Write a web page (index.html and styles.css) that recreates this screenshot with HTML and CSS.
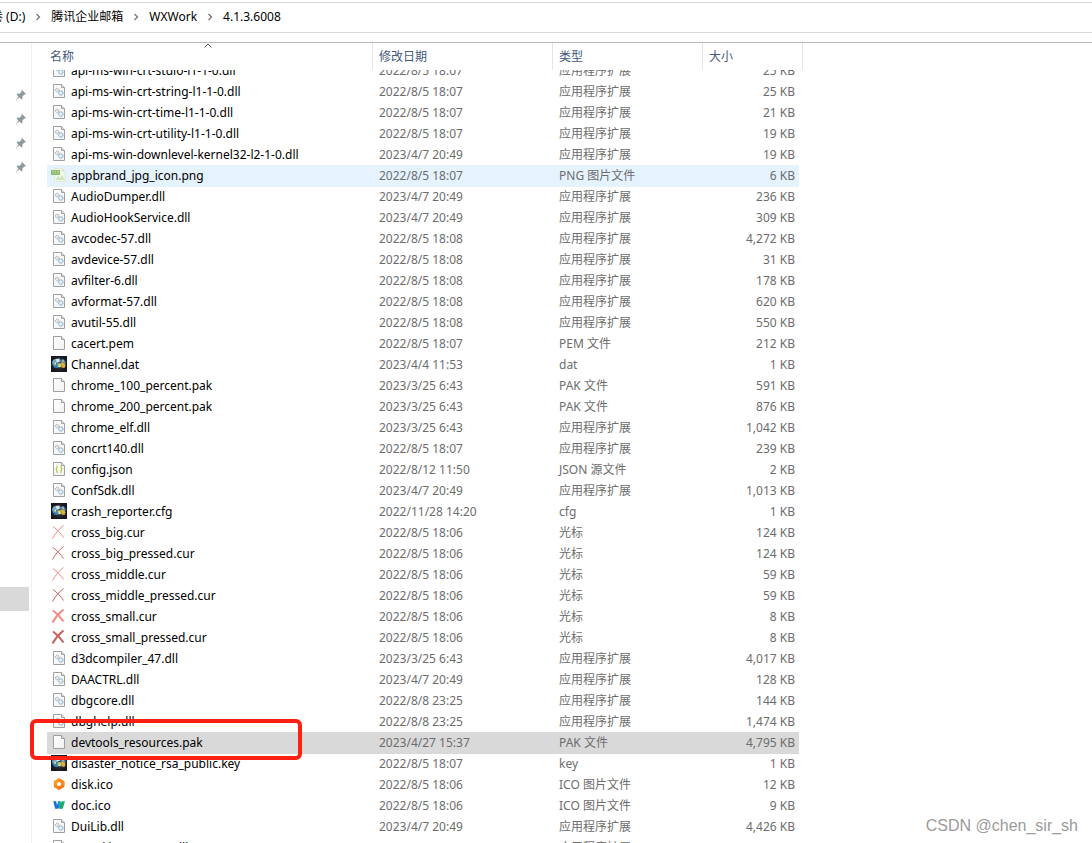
FILE: index.html
```html
<!DOCTYPE html>
<html lang="zh-CN">
<head>
<meta charset="utf-8">
<title>4.1.3.6008</title>
<link rel="stylesheet" href="styles.css">
</head>
<body>
<svg class="defs" aria-hidden="true">
  <defs>
    <linearGradient id="paper" x1="0" y1="0" x2="1" y2="1"><stop offset="0" stop-color="#fff"/><stop offset="1" stop-color="#f1f1f1"/></linearGradient>
    <linearGradient id="orange" x1="0" y1="0" x2="1" y2="1"><stop offset="0" stop-color="#ffb020"/><stop offset="1" stop-color="#f25a0c"/></linearGradient>
    <radialGradient id="night"><stop offset="0" stop-color="#3d4352"/><stop offset="1" stop-color="#17181f"/></radialGradient>
  </defs>
  <symbol id="file" viewBox="0 0 16 16"><path d="M2.5 1.5h8l3 3v10h-11z" fill="url(#paper)" stroke="#a0a0a0"/><path d="M10.5 1.5v3h3" fill="#e8e8e8" stroke="#a0a0a0"/></symbol>
  <symbol id="dll" viewBox="0 0 16 16"><use href="#file"/><circle cx="6.2" cy="7" r="1.8" fill="#e4e8ea" stroke="#9ea7ad" stroke-dasharray="1.2 .5"/><circle cx="9.8" cy="10" r="2.2" fill="#d7eaf5" stroke="#7fa6c0" stroke-dasharray="1.4 .4"/><circle cx="9.8" cy="10" r=".7" fill="#fff"/></symbol>
  <symbol id="json" viewBox="0 0 16 16"><use href="#file"/><path d="M6.8 5c-1.2 0-1 .8-1 1.7S5.5 8 4.700 8.200c.8.2 1.100.6 1.100 1.500s-.2 1.800 1 1.800M9.200 5c1.200 0 1 .8 1 1.700s.3 1.300 1.100 1.500c-.8.2-1.100.6-1.100 1.500s.2 1.800-1 1.800" fill="none" stroke="#b9c63c" stroke-width="1.200"/></symbol>
  <symbol id="png" viewBox="0 0 16 16"><path d="M3.500 1.500h7.500l3 3v10h-10.500z" fill="#f2f8ea" stroke="#dfe9d6"/><path d="M11 1.500v3h3" fill="#c9dfb8"/><path d="M5 12l2-3 2 2 2-3 2 4v1H5z" fill="#cfe5bd"/><path d="M0 3h9v5H0z" fill="#91bd70"/><path d="M1.500 4.500h1.500M4 4.500h1M6.500 4.500h1.500M1.500 6h1M4 6h1M6.500 6h1.500" stroke="#b9d6a2"/></symbol>
  <symbol id="app" viewBox="0 0 16 16"><path d="M0 0h16v16H0z" fill="url(#night)"/><path d="M1 6l1.500-2.500L5 3l1 3-1 3-3 1z" fill="#6fa9c6"/><path d="M4.500 3l4-.5.5 3-3 1.500z" fill="#dce7e8"/><path d="M8.500 4l4-1 2.500 3-1 3-4-1z" fill="#4f7c9b"/><path d="M2 8.500l3-1.500 2.500 1-.5 4-4-.5z" fill="#3989bb"/><path d="M6.500 7.500l3-.5 1 2.500-1.500 2-2-.5z" fill="#b9cf62"/><path d="M10 7l3-.5 1.500 3-1 2.500-3-.5z" fill="#dfae42"/><path d="M3.500 7l1.500-.5v2l-1.500.5zM11 4.500l2 0v1h-2zM8 9.500h1.500V11H8z" fill="#f0dfae"/></symbol>
  <symbol id="cross" viewBox="0 0 16 16"><path d="M2 2.500c4 3 8 7 10.500 11M12.500 1.500C8 5 4.500 9 1.500 14.500" fill="none" stroke="currentColor"/></symbol>
  <symbol id="disk" viewBox="0 0 16 16"><path d="M8 2l5.200 3v6L8 14l-5.200-3V5z" fill="url(#orange)"/><path d="M8 5.800l2 1.100v2.300l-2 1.100-2-1.100V6.900z" fill="#fff"/><path d="M10 6.900l3.500-2v5.200L10 9.200z" fill="#ff8b15"/></symbol>
  <symbol id="doc" viewBox="0 0 16 16"><path d="M2.200 4.200h3L6 8.500 7.200 4.200h2L7.500 11.800H4.200z" fill="#166fd8"/><path d="M7 4.200h2.500L11.200 9l-.7 2.800H8.200z" fill="#16a8bc"/><path d="M10.500 4.200H14L11.700 11.800H9.200z" fill="#24ae54"/></symbol>
  <symbol id="pin" viewBox="0 0 12 12"><path d="M7 1l4 4-1 .8-.8-.3L7.300 7.700l.2 2-1 .8-2.300-2.300L1 11l-.2-.2 2.700-3.300-2-2 .9-.9 2 .2L6.600 2.700 6.300 1.700z" fill="#8d979f"/></symbol>
  <symbol id="chevron" viewBox="0 0 6 8"><path d="M1.500 1l3 3-3 3" fill="none" stroke="#777" stroke-width="1.300"/></symbol>
</svg>

<nav class="address" aria-label="路径">
  <a class="crumb crumb-first" href="#">卷 (D:)</a>
  <svg class="chevron"><use href="#chevron"/></svg>
  <a class="crumb" href="#">腾讯企业邮箱</a>
  <svg class="chevron"><use href="#chevron"/></svg>
  <a class="crumb" href="#">WXWork</a>
  <svg class="chevron"><use href="#chevron"/></svg>
  <a class="crumb" href="#">4.1.3.6008</a>
</nav>

<div class="body">
  <aside class="sidebar">
    <div class="pins">
      <svg class="pin"><use href="#pin"/></svg>
      <svg class="pin"><use href="#pin"/></svg>
      <svg class="pin"><use href="#pin"/></svg>
      <svg class="pin"><use href="#pin"/></svg>
    </div>
    <div class="current"></div>
  </aside>

  <main class="files">
    <table class="table">
      <thead>
        <tr><th scope="col">名称<svg class="sort" viewBox="0 0 8 5"><path d="M.5 4.500L4 1l3.500 3.500" fill="none" stroke="#555"/></svg></th><th scope="col">修改日期</th><th scope="col">类型</th><th scope="col">大小</th></tr>
      </thead>
      <tbody>
        <tr><td><svg><use href="#dll"/></svg>api-ms-win-crt-stdio-l1-1-0.dll</td><td>2022/8/5 18:07</td><td>应用程序扩展</td><td>25 KB</td></tr>
        <tr><td><svg><use href="#dll"/></svg>api-ms-win-crt-string-l1-1-0.dll</td><td>2022/8/5 18:07</td><td>应用程序扩展</td><td>25 KB</td></tr>
        <tr><td><svg><use href="#dll"/></svg>api-ms-win-crt-time-l1-1-0.dll</td><td>2022/8/5 18:07</td><td>应用程序扩展</td><td>21 KB</td></tr>
        <tr><td><svg><use href="#dll"/></svg>api-ms-win-crt-utility-l1-1-0.dll</td><td>2022/8/5 18:07</td><td>应用程序扩展</td><td>19 KB</td></tr>
        <tr><td><svg><use href="#dll"/></svg>api-ms-win-downlevel-kernel32-l2-1-0.dll</td><td>2023/4/7 20:49</td><td>应用程序扩展</td><td>19 KB</td></tr>
        <tr class="hover"><td><svg><use href="#png"/></svg>appbrand_jpg_icon.png</td><td>2022/8/5 18:07</td><td>PNG 图片文件</td><td>6 KB</td></tr>
        <tr><td><svg><use href="#dll"/></svg>AudioDumper.dll</td><td>2023/4/7 20:49</td><td>应用程序扩展</td><td>236 KB</td></tr>
        <tr><td><svg><use href="#dll"/></svg>AudioHookService.dll</td><td>2023/4/7 20:49</td><td>应用程序扩展</td><td>309 KB</td></tr>
        <tr><td><svg><use href="#dll"/></svg>avcodec-57.dll</td><td>2022/8/5 18:08</td><td>应用程序扩展</td><td>4,272 KB</td></tr>
        <tr><td><svg><use href="#dll"/></svg>avdevice-57.dll</td><td>2022/8/5 18:08</td><td>应用程序扩展</td><td>31 KB</td></tr>
        <tr><td><svg><use href="#dll"/></svg>avfilter-6.dll</td><td>2022/8/5 18:08</td><td>应用程序扩展</td><td>178 KB</td></tr>
        <tr><td><svg><use href="#dll"/></svg>avformat-57.dll</td><td>2022/8/5 18:08</td><td>应用程序扩展</td><td>620 KB</td></tr>
        <tr><td><svg><use href="#dll"/></svg>avutil-55.dll</td><td>2022/8/5 18:08</td><td>应用程序扩展</td><td>550 KB</td></tr>
        <tr><td><svg><use href="#file"/></svg>cacert.pem</td><td>2022/8/5 18:07</td><td>PEM 文件</td><td>212 KB</td></tr>
        <tr><td><svg><use href="#app"/></svg>Channel.dat</td><td>2023/4/4 11:53</td><td>dat</td><td>1 KB</td></tr>
        <tr><td><svg><use href="#file"/></svg>chrome_100_percent.pak</td><td>2023/3/25 6:43</td><td>PAK 文件</td><td>591 KB</td></tr>
        <tr><td><svg><use href="#file"/></svg>chrome_200_percent.pak</td><td>2023/3/25 6:43</td><td>PAK 文件</td><td>876 KB</td></tr>
        <tr><td><svg><use href="#dll"/></svg>chrome_elf.dll</td><td>2023/3/25 6:43</td><td>应用程序扩展</td><td>1,042 KB</td></tr>
        <tr><td><svg><use href="#dll"/></svg>concrt140.dll</td><td>2022/8/5 18:07</td><td>应用程序扩展</td><td>239 KB</td></tr>
        <tr><td><svg><use href="#json"/></svg>config.json</td><td>2022/8/12 11:50</td><td>JSON 源文件</td><td>2 KB</td></tr>
        <tr><td><svg><use href="#dll"/></svg>ConfSdk.dll</td><td>2023/4/7 20:49</td><td>应用程序扩展</td><td>1,013 KB</td></tr>
        <tr><td><svg><use href="#app"/></svg>crash_reporter.cfg</td><td>2022/11/28 14:20</td><td>cfg</td><td>1 KB</td></tr>
        <tr><td><svg class="cross-light"><use href="#cross"/></svg>cross_big.cur</td><td>2022/8/5 18:06</td><td>光标</td><td>124 KB</td></tr>
        <tr><td><svg class="cross-dark"><use href="#cross"/></svg>cross_big_pressed.cur</td><td>2022/8/5 18:06</td><td>光标</td><td>124 KB</td></tr>
        <tr><td><svg class="cross-light"><use href="#cross"/></svg>cross_middle.cur</td><td>2022/8/5 18:06</td><td>光标</td><td>59 KB</td></tr>
        <tr><td><svg class="cross-dark"><use href="#cross"/></svg>cross_middle_pressed.cur</td><td>2022/8/5 18:06</td><td>光标</td><td>59 KB</td></tr>
        <tr><td><svg class="cross-light cross-bold"><use href="#cross"/></svg>cross_small.cur</td><td>2022/8/5 18:06</td><td>光标</td><td>8 KB</td></tr>
        <tr><td><svg class="cross-dark cross-bold"><use href="#cross"/></svg>cross_small_pressed.cur</td><td>2022/8/5 18:06</td><td>光标</td><td>8 KB</td></tr>
        <tr><td><svg><use href="#dll"/></svg>d3dcompiler_47.dll</td><td>2023/3/25 6:43</td><td>应用程序扩展</td><td>4,017 KB</td></tr>
        <tr><td><svg><use href="#dll"/></svg>DAACTRL.dll</td><td>2023/4/7 20:49</td><td>应用程序扩展</td><td>128 KB</td></tr>
        <tr><td><svg><use href="#dll"/></svg>dbgcore.dll</td><td>2022/8/8 23:25</td><td>应用程序扩展</td><td>144 KB</td></tr>
        <tr><td><svg><use href="#dll"/></svg>dbghelp.dll</td><td>2022/8/8 23:25</td><td>应用程序扩展</td><td>1,474 KB</td></tr>
        <tr class="selected"><td><svg><use href="#file"/></svg>devtools_resources.pak<span class="marker"></span></td><td>2023/4/27 15:37</td><td>PAK 文件</td><td>4,795 KB</td></tr>
        <tr><td><svg><use href="#app"/></svg>disaster_notice_rsa_public.key</td><td>2022/8/5 18:07</td><td>key</td><td>1 KB</td></tr>
        <tr><td><svg><use href="#disk"/></svg>disk.ico</td><td>2022/8/5 18:06</td><td>ICO 图片文件</td><td>12 KB</td></tr>
        <tr><td><svg><use href="#doc"/></svg>doc.ico</td><td>2022/8/5 18:06</td><td>ICO 图片文件</td><td>9 KB</td></tr>
        <tr><td><svg><use href="#dll"/></svg>DuiLib.dll</td><td>2023/4/7 20:49</td><td>应用程序扩展</td><td>4,426 KB</td></tr>
        <tr><td><svg><use href="#dll"/></svg>eventkit_common.dll</td><td>2023/4/7 20:49</td><td>应用程序扩展</td><td>96 KB</td></tr>
      </tbody>
    </table>
  </main>
</div>
<p class="watermark">CSDN @chen_sir_sh</p>
</body>
</html>
```

FILE: styles.css
```css
* {
  box-sizing: border-box;
}

body {
  margin: 0;
  height: 100vh;
  overflow: hidden;
  display: flex;
  flex-direction: column;
  padding-top: 2px;
  background: #fff;
  color: #000;
  font: 12px/20px "Noto Sans", "Noto Sans CJK SC", sans-serif;
}

.defs {
  position: absolute;
  width: 0;
  height: 0;
}

.address {
  display: flex;
  align-items: center;
  flex: none;
  height: 31px;
  padding-bottom: 2px;
  border-top: 1px solid #d9d9d9;
  border-bottom: 1px solid #d9d9d9;
}

.crumb {
  color: #000;
  text-decoration: none;
  white-space: nowrap;
}

.crumb-first {
  margin-left: -9px;
}

.chevron {
  width: 6px;
  height: 8px;
  margin: 0 10px;
}

.body {
  flex: 1;
  min-height: 0;
  display: flex;
  margin-top: 9px;
  border-top: 1px solid #b9b9b9;
}

.sidebar {
  flex: none;
  width: 32px;
  border-right: 1px solid #f0f0f0;
}

.pins {
  display: flex;
  flex-direction: column;
  gap: 12px;
  padding: 46px 0 0 15px;
}

.pin {
  width: 12px;
  height: 12px;
}

.current {
  width: 29px;
  height: 24px;
  margin-top: 414px;
  background: #d9d9d9;
}

.files {
  flex: 1;
  min-width: 0;
  padding-left: 15px;
}

.table {
  display: flex;
  flex-direction: column;
  height: 100%;
}

thead {
  display: block;
  flex: none;
}

tbody {
  display: block;
  flex: 1;
  min-height: 0;
  margin-left: -20px;
  padding-left: 20px;
  overflow: hidden;
}

tr {
  display: grid;
  grid-template-columns: 326px 180px 150px 96px;
  width: max-content;
}

thead tr {
  grid-template-columns: 326px 180px 150px 100px;
}

tbody tr:first-child {
  margin-top: -10px;
}

th {
  position: relative;
  height: 27px;
  padding: 4px 6px 0;
  border-right: 1px solid #e5e5e5;
  color: #43597c;
  font-weight: 400;
  text-align: left;
}

th:first-child {
  padding-left: 3px;
}

.sort {
  position: absolute;
  top: 0;
  left: 0;
  right: 4px;
  width: 8px;
  height: 5px;
  margin: 0 auto;
}

td {
  height: 21px;
  padding: 1px 6px 0;
  color: #6d6d6d;
  white-space: pre;
}

td:first-child {
  position: relative;
  display: flex;
  align-items: center;
  gap: 4px;
  padding: 0 4px;
  color: #000;
}

td:last-child {
  padding-right: 4px;
  text-align: right;
}

td svg {
  flex: none;
  width: 16px;
  height: 16px;
  margin-bottom: 2px;
}

.hover {
  background: #e5f3ff;
  box-shadow: 0 1px #e5f3ff;
}

.selected {
  background: #d9d9d9;
  box-shadow: 0 1px #d9d9d9;
}

.marker {
  position: absolute;
  z-index: 1;
  top: -13px;
  left: -17px;
  width: 272px;
  height: 41px;
  border: 4px solid #ff2014;
  border-radius: 6px;
}

.cross-light {
  color: #f28b85;
}

.cross-dark {
  color: #c9605f;
}

.cross-bold {
  stroke-width: 2px;
}

.watermark {
  position: absolute;
  right: 14px;
  bottom: 7px;
  margin: 0;
  color: #9b9b9b;
  font: 16px/20px "Liberation Sans", sans-serif;
}
```
